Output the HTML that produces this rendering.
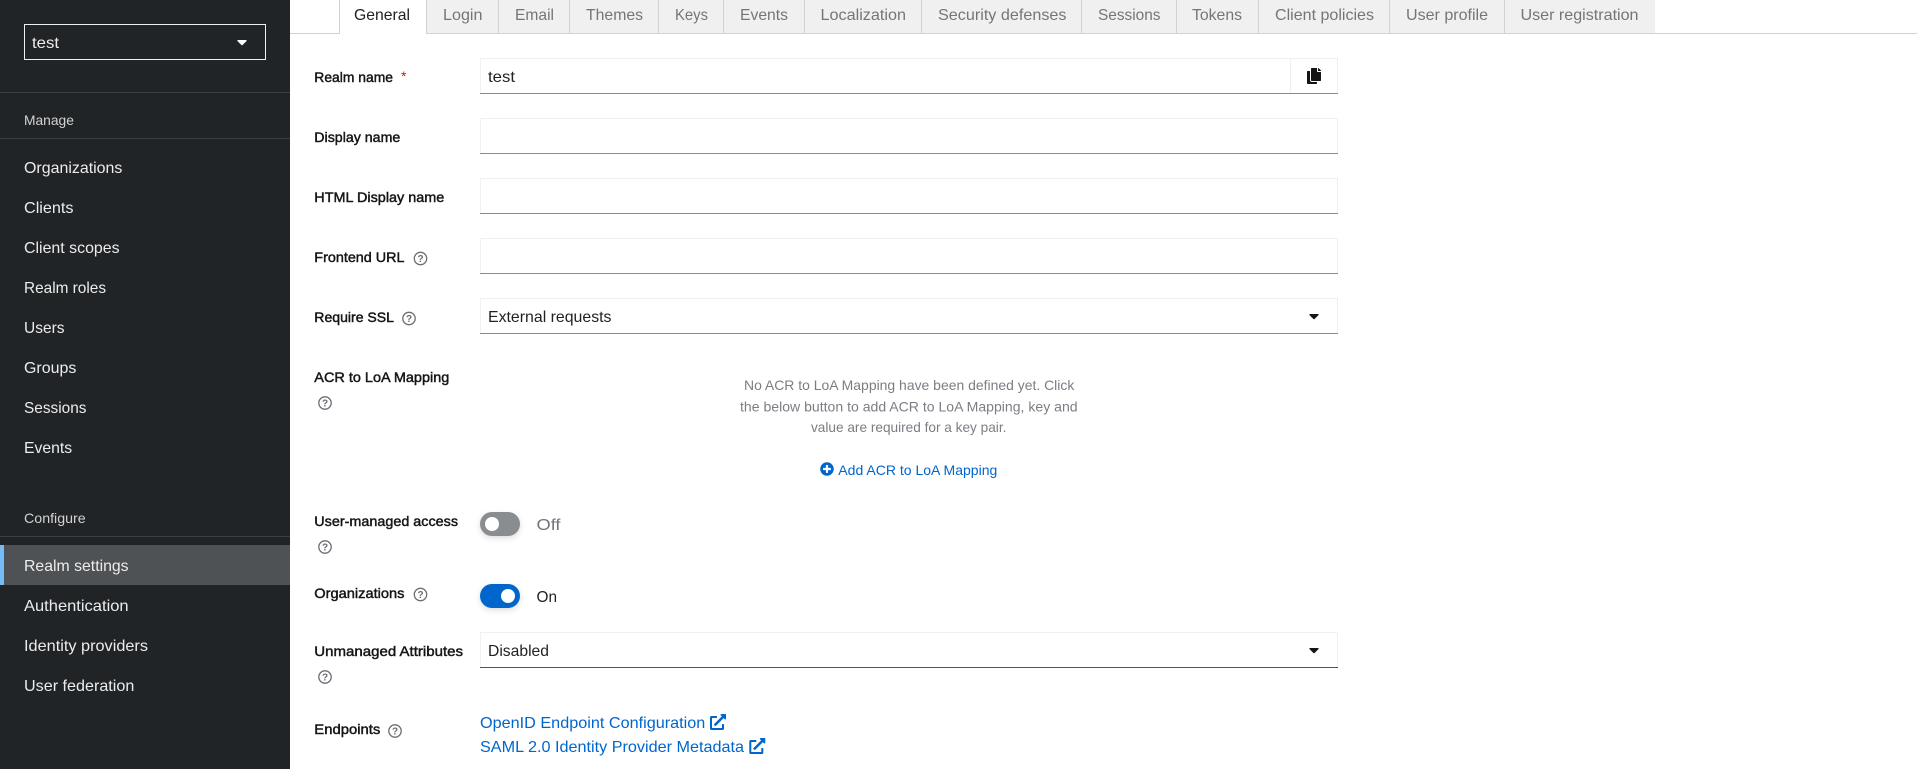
<!DOCTYPE html>
<html lang="en">
<head>
<meta charset="utf-8">
<title>Realm settings</title>
<style>
html,body{margin:0;padding:0;background:#fff;overflow:hidden}
svg{display:block}
text{font-family:"Liberation Sans",sans-serif;font-size:16px}
.n text{fill:#ececec}
.s text{font-size:14px;fill:#d2d2d2}
.t text{fill:#72767b}
.l text{font-size:14px;font-weight:normal;fill:#151515;stroke:#151515;stroke-width:.45px}
.i text{fill:#222}
.e text{font-size:14px;fill:#7a7e83}
.a text{fill:#0066cc}
.h circle{fill:none;stroke:#6a6e73;stroke-width:1.3}
.h text{font-size:10px;font-weight:bold;fill:#6a6e73;text-anchor:middle}
.sw{filter:drop-shadow(0 2px 3px rgba(0,0,0,.14))}
</style>
</head>
<body>
<svg width="1917" height="769" viewBox="0 0 1917 769" xmlns="http://www.w3.org/2000/svg">
<rect width="1917" height="769" fill="#fff"/>
<!-- sidebar -->
<rect width="290" height="769" fill="#212427"/>
<rect x="24.5" y="24.5" width="241" height="35" fill="none" stroke="#f0f0f0"/>
<g class="n"><text x="32" y="48" textLength="27" lengthAdjust="spacingAndGlyphs">test</text></g>
<path transform="translate(237,34) scale(.03125)" fill="#fff" d="M31.3 192h257.3c17.8 0 26.7 21.5 14.1 34.1L174.1 354.8c-7.8 7.8-20.5 7.8-28.3 0L17.2 226.1C4.6 213.5 13.5 192 31.3 192z"/>
<rect x="0" y="92" width="290" height="1" fill="#3c3f42"/>
<rect x="0" y="138" width="290" height="1" fill="#3c3f42"/>
<rect x="0" y="536" width="290" height="1" fill="#3c3f42"/>
<rect x="0" y="545" width="290" height="40" fill="#4f5255"/>
<rect x="0" y="545" width="4" height="40" fill="#73bcf7"/>
<g class="s">
<text x="24" y="125" textLength="49.9" lengthAdjust="spacingAndGlyphs">Manage</text>
<text x="24" y="523" textLength="61.7" lengthAdjust="spacingAndGlyphs">Configure</text>
</g>
<g class="n">
<text x="24" y="173" textLength="98.4" lengthAdjust="spacingAndGlyphs">Organizations</text>
<text x="24" y="213" textLength="49.5" lengthAdjust="spacingAndGlyphs">Clients</text>
<text x="24" y="253" textLength="95.6" lengthAdjust="spacingAndGlyphs">Client scopes</text>
<text x="24" y="293" textLength="82" lengthAdjust="spacingAndGlyphs">Realm roles</text>
<text x="24" y="333" textLength="40.5" lengthAdjust="spacingAndGlyphs">Users</text>
<text x="24" y="373" textLength="52.3" lengthAdjust="spacingAndGlyphs">Groups</text>
<text x="24" y="413" textLength="62.5" lengthAdjust="spacingAndGlyphs">Sessions</text>
<text x="24" y="453" textLength="48.2" lengthAdjust="spacingAndGlyphs">Events</text>
<text x="24" y="571" textLength="104.6" lengthAdjust="spacingAndGlyphs">Realm settings</text>
<text x="24" y="611" textLength="104.6" lengthAdjust="spacingAndGlyphs">Authentication</text>
<text x="24" y="651" textLength="124" lengthAdjust="spacingAndGlyphs">Identity providers</text>
<text x="24" y="691" textLength="110.3" lengthAdjust="spacingAndGlyphs">User federation</text>
</g>
<!-- tabs -->
<rect x="290" y="33" width="1627" height="1" fill="#d2d2d2"/>
<rect x="427" y="0" width="1228" height="33" fill="#f0f0f0"/>
<g fill="#d2d2d2">
<rect x="339" y="0" width="1" height="34"/>
<rect x="426" y="0" width="1" height="34"/>
<rect x="498" y="0" width="1" height="33"/>
<rect x="569" y="0" width="1" height="33"/>
<rect x="658" y="0" width="1" height="33"/>
<rect x="723" y="0" width="1" height="33"/>
<rect x="804" y="0" width="1" height="33"/>
<rect x="921" y="0" width="1" height="33"/>
<rect x="1081" y="0" width="1" height="33"/>
<rect x="1176" y="0" width="1" height="33"/>
<rect x="1258" y="0" width="1" height="33"/>
<rect x="1389" y="0" width="1" height="33"/>
<rect x="1504" y="0" width="1" height="33"/>
</g>
<rect x="340" y="33" width="86" height="1" fill="#fff"/>
<g class="i"><text x="354" y="20" textLength="56" lengthAdjust="spacingAndGlyphs">General</text></g>
<g class="t">
<text x="443" y="20" textLength="39.5" lengthAdjust="spacingAndGlyphs">Login</text>
<text x="515" y="20" textLength="39" lengthAdjust="spacingAndGlyphs">Email</text>
<text x="586" y="20" textLength="57" lengthAdjust="spacingAndGlyphs">Themes</text>
<text x="675" y="20" textLength="33" lengthAdjust="spacingAndGlyphs">Keys</text>
<text x="740" y="20" textLength="48" lengthAdjust="spacingAndGlyphs">Events</text>
<text x="820.5" y="20" textLength="85.5" lengthAdjust="spacingAndGlyphs">Localization</text>
<text x="938" y="20" textLength="128.5" lengthAdjust="spacingAndGlyphs">Security defenses</text>
<text x="1098" y="20" textLength="62.5" lengthAdjust="spacingAndGlyphs">Sessions</text>
<text x="1192" y="20" textLength="50" lengthAdjust="spacingAndGlyphs">Tokens</text>
<text x="1275" y="20" textLength="99" lengthAdjust="spacingAndGlyphs">Client policies</text>
<text x="1406" y="20" textLength="82" lengthAdjust="spacingAndGlyphs">User profile</text>
<text x="1520.5" y="20" textLength="118" lengthAdjust="spacingAndGlyphs">User registration</text>
</g>
<!-- inputs -->
<g fill="none" stroke="#f0f0f0">
<rect x="480.5" y="58.5" width="857" height="35"/>
<rect x="480.5" y="118.5" width="857" height="35"/>
<rect x="480.5" y="178.5" width="857" height="35"/>
<rect x="480.5" y="238.5" width="857" height="35"/>
<rect x="480.5" y="298.5" width="857" height="35"/>
<rect x="480.5" y="632.5" width="857" height="35"/>
<path d="M1290.5 58v36"/>
</g>
<g fill="#8a8d90">
<rect x="480" y="93" width="858" height="1"/>
<rect x="480" y="153" width="858" height="1"/>
<rect x="480" y="213" width="858" height="1"/>
<rect x="480" y="273" width="858" height="1"/>
<rect x="480" y="333" width="858" height="1"/>
</g>
<rect x="480" y="667" width="858" height="1" fill="#0066cc"/>
<g class="i">
<text x="488" y="82" textLength="27" lengthAdjust="spacingAndGlyphs">test</text>
<text x="488" y="322" textLength="123.5" lengthAdjust="spacingAndGlyphs">External requests</text>
<text x="488" y="656" textLength="61" lengthAdjust="spacingAndGlyphs">Disabled</text>
</g>
<path transform="translate(1307,68) scale(.03125)" fill="#151515" d="M320 448v40c0 13.255-10.745 24-24 24H24c-13.255 0-24-10.745-24-24V120c0-13.255 10.745-24 24-24h72v296c0 30.879 25.121 56 56 56h168zm0-344V0H152c-13.255 0-24 10.745-24 24v368c0 13.255 10.745 24 24 24h272c13.255 0 24-10.745 24-24V128H344c-13.2 0-24-10.8-24-24zm120.971-31.029L375.029 7.029A24 24 0 0 0 358.059 0H352v96h96v-6.059a24 24 0 0 0-7.029-16.97z"/>
<path transform="translate(1309,308) scale(.03125)" fill="#151515" d="M31.3 192h257.3c17.8 0 26.7 21.5 14.1 34.1L174.1 354.8c-7.8 7.8-20.5 7.8-28.3 0L17.2 226.1C4.6 213.5 13.5 192 31.3 192z"/>
<path transform="translate(1309,642) scale(.03125)" fill="#151515" d="M31.3 192h257.3c17.8 0 26.7 21.5 14.1 34.1L174.1 354.8c-7.8 7.8-20.5 7.8-28.3 0L17.2 226.1C4.6 213.5 13.5 192 31.3 192z"/>
<!-- labels -->
<g class="l">
<text x="314.3" y="82" textLength="78.7" lengthAdjust="spacingAndGlyphs">Realm name</text>
<text x="314.3" y="142" textLength="86" lengthAdjust="spacingAndGlyphs">Display name</text>
<text x="314.3" y="202" textLength="130" lengthAdjust="spacingAndGlyphs">HTML Display name</text>
<text x="314.3" y="262" textLength="90.2" lengthAdjust="spacingAndGlyphs">Frontend URL</text>
<text x="314.3" y="322" textLength="79.7" lengthAdjust="spacingAndGlyphs">Require SSL</text>
<text x="314.3" y="382" textLength="135" lengthAdjust="spacingAndGlyphs">ACR to LoA Mapping</text>
<text x="314.3" y="526" textLength="143.7" lengthAdjust="spacingAndGlyphs">User-managed access</text>
<text x="314.3" y="598" textLength="90.2" lengthAdjust="spacingAndGlyphs">Organizations</text>
<text x="314.3" y="656" textLength="148.7" lengthAdjust="spacingAndGlyphs">Unmanaged Attributes</text>
<text x="314.3" y="734" textLength="66" lengthAdjust="spacingAndGlyphs">Endpoints</text>
</g>
<text x="401" y="81" style="font-size:14px" fill="#c9190b">*</text>
<!-- help icons -->
<g class="h">
<circle cx="420.5" cy="258.5" r="6.2"/><text x="420.5" y="262">?</text>
<circle cx="409" cy="318.5" r="6.2"/><text x="409" y="322">?</text>
<circle cx="325" cy="403" r="6.2"/><text x="325" y="406.5">?</text>
<circle cx="325" cy="547" r="6.2"/><text x="325" y="550.5">?</text>
<circle cx="420.5" cy="594.5" r="6.2"/><text x="420.5" y="598">?</text>
<circle cx="325" cy="677" r="6.2"/><text x="325" y="680.5">?</text>
<circle cx="395" cy="731" r="6.2"/><text x="395" y="734.5">?</text>
</g>
<!-- empty state -->
<g class="e">
<text x="744" y="390" textLength="330.3" lengthAdjust="spacingAndGlyphs">No ACR to LoA Mapping have been defined yet. Click</text>
<text x="740" y="411.5" textLength="337.6" lengthAdjust="spacingAndGlyphs">the below button to add ACR to LoA Mapping, key and</text>
<text x="811" y="432" textLength="195.4" lengthAdjust="spacingAndGlyphs">value are required for a key pair.</text>
</g>
<path transform="translate(820,462) scale(.0273)" fill="#0066cc" d="M256 8C119 8 8 119 8 256s111 248 248 248 248-111 248-248S393 8 256 8zm144 276c0 6.6-5.4 12-12 12h-92v92c0 6.6-5.4 12-12 12h-56c-6.6 0-12-5.4-12-12v-92h-92c-6.6 0-12-5.4-12-12v-56c0-6.6 5.4-12 12-12h92v-92c0-6.6 5.4-12 12-12h56c6.6 0 12 5.4 12 12v92h92c6.6 0 12 5.4 12 12v56z"/>
<g class="a">
<text x="838.3" y="475" style="font-size:14px" textLength="159" lengthAdjust="spacingAndGlyphs">Add ACR to LoA Mapping</text>
<text x="480" y="728" textLength="225.3" lengthAdjust="spacingAndGlyphs">OpenID Endpoint Configuration</text>
<text x="480" y="752" textLength="264" lengthAdjust="spacingAndGlyphs">SAML 2.0 Identity Provider Metadata</text>
</g>
<path transform="translate(710,714) scale(.03125)" fill="#0066cc" d="M432,320H400a16,16,0,0,0-16,16V448H64V128H208a16,16,0,0,0,16-16V80a16,16,0,0,0-16-16H48A48,48,0,0,0,0,112V464a48,48,0,0,0,48,48H400a48,48,0,0,0,48-48V336A16,16,0,0,0,432,320ZM488,0h-128c-21.37,0-32.05,25.91-17,41l35.73,35.73L135,320.37a24,24,0,0,0,0,34L157.67,377a24,24,0,0,0,34,0L435.28,133.32,471,169c15,15,41,4.5,41-17V24A24,24,0,0,0,488,0Z"/>
<path transform="translate(749.3,738) scale(.03125)" fill="#0066cc" d="M432,320H400a16,16,0,0,0-16,16V448H64V128H208a16,16,0,0,0,16-16V80a16,16,0,0,0-16-16H48A48,48,0,0,0,0,112V464a48,48,0,0,0,48,48H400a48,48,0,0,0,48-48V336A16,16,0,0,0,432,320ZM488,0h-128c-21.37,0-32.05,25.91-17,41l35.73,35.73L135,320.37a24,24,0,0,0,0,34L157.67,377a24,24,0,0,0,34,0L435.28,133.32,471,169c15,15,41,4.5,41-17V24A24,24,0,0,0,488,0Z"/>
<!-- toggles -->
<rect class="sw" x="480" y="512" width="40" height="24" rx="12" fill="#8a8d90"/>
<circle cx="492" cy="524" r="7" fill="#fff"/>
<text x="536.5" y="530" fill="#72767b" textLength="24" lengthAdjust="spacingAndGlyphs">Off</text>
<rect class="sw" x="480" y="584" width="40" height="24" rx="12" fill="#0066cc"/>
<circle cx="508" cy="596" r="7" fill="#fff"/>
<text x="536.5" y="602" fill="#222" textLength="20.5" lengthAdjust="spacingAndGlyphs">On</text>
</svg>
</body>
</html>
